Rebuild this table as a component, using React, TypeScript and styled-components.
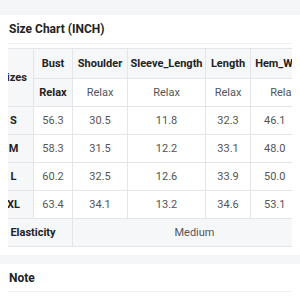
import React from "react";
import styled, { createGlobalStyle } from "styled-components";

const GlobalStyle = createGlobalStyle`
  html, body { margin: 0; padding: 0; background: #ffffff; }
  body { font-family: Roboto, "Liberation Sans", Arial, sans-serif; color: #222; }
`;

const Page = styled.div`
  width: 300px;
  display: flex;
  flex-direction: column;
`;

const Band = styled.div<{ $h: number }>`
  height: ${(p) => p.$h}px;
  background: #f5f6f8;
`;

const Section = styled.section<{ $pb?: number }>`
  padding: 0 8px ${(p) => p.$pb ?? 0}px 8px;
  display: flex;
  flex-direction: column;
`;

const SectionTitle = styled.div<{ $h: number }>`
  height: ${(p) => p.$h}px;
  display: flex;
  align-items: center;
  padding-left: 1px;
  font-size: 12px;
  font-weight: 700;
  color: #222;
  border-bottom: 1px solid #f0f1f3;
  box-sizing: border-box;
`;

const TableScroll = styled.div`
  margin-top: 4px;
  width: 284px;
  overflow: hidden;
`;

const Table = styled.table`
  margin-left: -15px;
  border-collapse: collapse;
  table-layout: fixed;
  width: 323px;
  font-size: 11px;
`;

const Th = styled.th<{ $h?: number }>`
  background: #f6f7f9;
  border: 1px solid #e4e5e8;
  font-weight: 700;
  color: #222;
  text-align: center;
  white-space: nowrap;
  padding: 0;
  height: ${(p) => p.$h ?? 27}px;
`;

const Td = styled.td<{ $left?: boolean; $gray?: boolean }>`
  background: ${(p) => (p.$gray ? "#f6f7f9" : "#ffffff")};
  border: 1px solid #e4e5e8;
  color: #555;
  text-align: ${(p) => (p.$left ? "left" : "center")};
  padding: 0 0 0 ${(p) => (p.$left ? 13 : 0)}px;
  white-space: nowrap;
  height: 27px;
`;

const cols = [40, 39, 55, 78, 45, 66];
const headers = ["Bust", "Shoulder", "Sleeve_Length", "Length", "Hem_Width"];
const rows: [string, string[]][] = [
  ["S", ["56.3", "30.5", "11.8", "32.3", "46.1"]],
  ["M", ["58.3", "31.5", "12.2", "33.1", "48.0"]],
  ["L", ["60.2", "32.5", "12.6", "33.9", "50.0"]],
  ["XL", ["63.4", "34.1", "13.2", "34.6", "53.1"]],
];

export default function App() {
  return (
    <Page>
      <GlobalStyle />
      <Band $h={15} />
      <Section $pb={8}>
        <SectionTitle $h={29}>Size Chart (INCH)</SectionTitle>
        <TableScroll>
          <Table>
            <colgroup>
              {cols.map((w, i) => (
                <col key={i} style={{ width: w }} />
              ))}
            </colgroup>
            <thead>
              <tr>
                <Th rowSpan={2}>Sizes</Th>
                {headers.map((h) => (
                  <Th key={h} $h={29}>
                    {h}
                  </Th>
                ))}
              </tr>
              <tr>
                <Th>Relax</Th>
                {headers.slice(1).map((h) => (
                  <Td key={h}>Relax</Td>
                ))}
              </tr>
            </thead>
            <tbody>
              {rows.map(([size, vals]) => (
                <tr key={size}>
                  <Th>{size}</Th>
                  {vals.map((v, i) => (
                    <Td key={i} $left={i === 4}>
                      {v}
                    </Td>
                  ))}
                </tr>
              ))}
              <tr>
                <Th colSpan={2}>Elasticity</Th>
                <Td colSpan={4} $gray>
                  Medium
                </Td>
              </tr>
            </tbody>
          </Table>
        </TableScroll>
      </Section>
      <Band $h={9} />
      <Section>
        <SectionTitle $h={28}>Note</SectionTitle>
      </Section>
    </Page>
  );
}
